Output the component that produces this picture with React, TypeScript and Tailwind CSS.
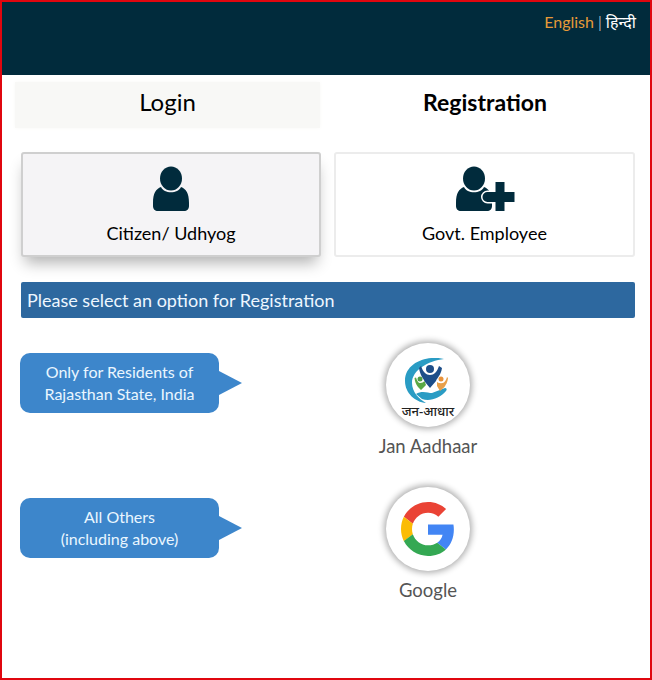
const UserIcon = ({ plus }: { plus?: boolean }) => {
  return (
    <svg width={plus ? 60 : 36} height="46" viewBox={plus ? "0 0 60 46" : "0 0 36 46"} className="block">
      <g fill="#012b3c" transform={plus ? "translate(1 1)" : "translate(0 1)"}>
        <ellipse cx="18" cy="11.500" rx="11" ry="12" />
        <path d="M8 20 C11 27 25 27 28 20 C33 22 36 26 36 36 L36 39 C36 42 34 44 31 44 L5 44 C2 44 0 42 0 39 L0 36 C0 26 3 22 8 20 Z" />
      </g>
      {plus && (
        <path
          d="M40.500 16 h9 v10 h10 v10 h-10 v9 h-9 v-9 h-8 a5 5 0 0 1 0 -10 h8 z"
          fill="#012b3c"
          stroke="#ffffff"
          strokeWidth="3"
          paintOrder="stroke"
        />
      )}
    </svg>
  );
};

const GoogleLogo = () => {
  return (
    <svg width="54" height="54" viewBox="0 0 48 48">
      <path fill="#EA4335" d="M24 9.500c3.540 0 6.710 1.220 9.210 3.600l6.850-6.850C35.900 2.380 30.470 0 24 0 14.620 0 6.510 5.380 2.560 13.220l7.980 6.190C12.430 13.720 17.740 9.500 24 9.500z" />
      <path fill="#4285F4" d="M46.980 24.550c0-1.570-.15-3.090-.38-4.550H24v9.020h12.940c-.58 2.960-2.260 5.480-4.780 7.180l7.730 6c4.510-4.180 7.090-10.360 7.090-17.650z" />
      <path fill="#FBBC05" d="M10.530 28.590c-.48-1.450-.76-2.990-.76-4.590s.27-3.140.76-4.590l-7.980-6.190C.92 16.460 0 20.120 0 24c0 3.880.92 7.540 2.560 10.780l7.970-6.190z" />
      <path fill="#34A853" d="M24 48c6.480 0 11.930-2.130 15.890-5.810l-7.730-6c-2.150 1.450-4.920 2.300-8.160 2.300-6.260 0-11.570-4.220-13.470-9.910l-7.980 6.190C6.510 42.620 14.620 48 24 48z" />
    </svg>
  );
};

const JanAadhaarLogo = () => {
  return (
    <div className="flex flex-col items-center pt-[7px]">
      <svg width="52" height="46" viewBox="2 0 52 46" className="block">
        {/* crescent */}
        <path d="M44 1 C30 -3 5 3 5 23 C5 35 15 44 26 45 C19 41 12 34 12 25 C12 12 28 3 44 1 Z" fill="#2a9cc4" />
        {/* hand */}
        <path d="M16 36 C22 32 28 35 32 35 L45 30 C47 30 47 32 46 33 C40 40 30 44 22 41 Z" fill="#2a9cc4" />
        {/* blue figure */}
        <circle cx="30" cy="11" r="4" fill="#1d4e89" />
        <path d="M19 10 L21 8 C23 14 26 17 30 17 C34 17 37 14 39 8 L42 10 C41 17 37 20 36 23 L30 30 L25 24 C23 20 20 17 19 10 Z" fill="#1d4e89" />
        {/* green figure */}
        <circle cx="20" cy="21" r="2.500" fill="#4f9d45" />
        <path d="M14.500 20 L16 19.500 C17 23 18.500 25 20 25 C22 25 23.500 24 24.500 23 L26 27 L21 32 L18 29 C16 26 15 24 14.500 20 Z" fill="#5aa845" />
        {/* orange figure */}
        <circle cx="41" cy="21" r="2.500" fill="#e8923a" />
        <path d="M47 19 L48 20 C47.500 25 45.500 27 44.500 29 L40 33 L37 28 L37 24 C39 25.500 42 25.500 44 24.500 C45.500 23 46.500 21 47 19 Z" fill="#e8a04a" />
      </svg>
      <span className="text-[13px] leading-[15px] font-medium text-[#222] font-['Noto_Sans','Noto_Sans_CJK_SC',sans-serif]">
        जन-आधार
      </span>
    </div>
  );
};

const Bubble = ({ lines }: { lines: string[] }) => {
  return (
    <div className="flex items-center w-[222px]">
      <div className="w-[199px] h-[60px] bg-[#3d86cb] rounded-[10px] flex flex-col justify-center items-center text-[#eaf6ff] text-[16px] leading-[22px] pb-[1px]">
        {lines.map((l) => (
          <div key={l}>{l}</div>
        ))}
      </div>
      <div className="w-0 h-0 border-y-[12px] border-y-transparent border-l-[23px] border-l-[#3d86cb]" />
    </div>
  );
};

const Provider = ({ label, children }: { label: string; children: React.ReactNode }) => {
  return (
    <div className="flex flex-col items-center w-[130px]">
      <div className="w-[84px] h-[84px] rounded-full bg-white flex items-center justify-center shadow-[0_0_6px_2px_rgba(0,0,0,0.32)]">
        {children}
      </div>
      <div className="mt-[7px] text-[18.500px] leading-[24px] text-[#555]">{label}</div>
    </div>
  );
};

export default function App() {
  return (
    <div className="w-[652px] h-[680px] border-2 border-[#e0060f] bg-white font-['Lato','Noto_Sans',sans-serif] overflow-hidden">
      {/* Header */}
      <div className="h-[73px] bg-[#012b3c] flex justify-end items-start pt-[9px] pr-[14px] text-[16px] leading-[22px]">
        <span className="text-[#e79a38]">English</span>
        <span className="text-white mx-[4px] font-light">|</span>
        <span className="text-white font-['Noto_Sans','Noto_Sans_CJK_SC',sans-serif]">हिन्दी</span>
      </div>

      {/* Tabs */}
      <div className="flex pt-[7px] pl-[13px]">
        <div className="w-[305px] h-[46px] bg-[#f8f8f6] shadow-[0_0_4px_#f8f8f6] flex items-center justify-center pb-[6px] text-[24px] text-black">
          Login
        </div>
        <div className="flex-1 h-[46px] flex items-center justify-center pb-[6px] text-[23px] font-bold text-black">
          Registration
        </div>
      </div>

      {/* User type cards */}
      <div className="flex gap-[13px] mt-[24px] ml-[19px] mr-[15px]">
        <div className="w-[300px] h-[105px] bg-[#f5f4f6] border-2 border-[#cfcfcf] rounded-[3px] shadow-[0_10px_14px_-4px_rgba(0,0,0,0.3)] flex flex-col items-center pt-[12px]">
          <UserIcon />
          <div className="mt-[9px] text-[18px] leading-[24px] text-black">Citizen/ Udhyog</div>
        </div>
        <div className="flex-1 h-[105px] bg-white border-2 border-[#ececec] rounded-[3px] flex flex-col items-center pt-[12px]">
          <UserIcon plus />
          <div className="mt-[9px] text-[18px] leading-[24px] text-black">Govt. Employee</div>
        </div>
      </div>

      {/* Notice */}
      <div className="mt-[25px] ml-[19px] mr-[15px] h-[36px] bg-[#2d689f] rounded-[2px] flex items-center pl-[6px] text-[18px] text-[#eef7ff]">
        Please select an option for Registration
      </div>

      {/* Options */}
      <div className="ml-[18px] mt-[25px] flex flex-col gap-[29px]">
        <div className="flex items-start">
          <div className="pt-[10px]">
            <Bubble lines={["Only for Residents of", "Rajasthan State, India"]} />
          </div>
          <div className="ml-[121px]">
            <Provider label="Jan Aadhaar">
              <JanAadhaarLogo />
            </Provider>
          </div>
        </div>
        <div className="flex items-start">
          <div className="pt-[11px]">
            <Bubble lines={["All Others", "(including above)"]} />
          </div>
          <div className="ml-[121px]">
            <Provider label="Google">
              <GoogleLogo />
            </Provider>
          </div>
        </div>
      </div>
    </div>
  );
}
